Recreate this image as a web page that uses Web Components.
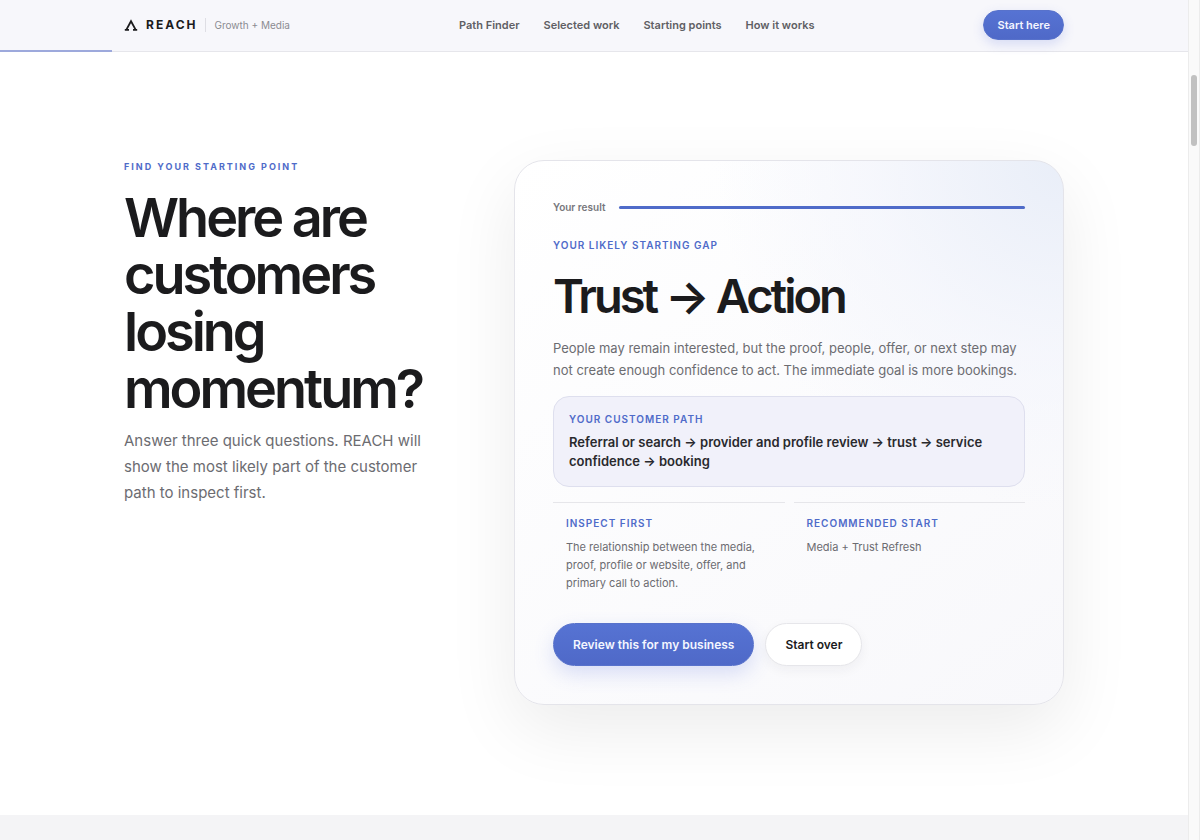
<!DOCTYPE html>
<html lang="en">
<head>
<meta charset="utf-8">
<meta name="viewport" content="width=device-width, initial-scale=1">
<title>REACH Growth + Media</title>
<style>
  :root {
    --accent: #4f6bc9;
    --ink: #1b1b1d;
    --muted: #6c6c71;
    --line: #e4e4ea;
  }
  html, body { margin: 0; }
  body {
    background: #fff;
    color: var(--ink);
    font: 400 13px/22px Inter, "Liberation Sans", sans-serif;
    -webkit-font-smoothing: antialiased;
  }
</style>
</head>
<body>
<reach-page>
  <reach-header slot="header"></reach-header>
  <path-finder>
    <section-intro slot="intro">
      <eyebrow-label slot="eyebrow" wide>Find your starting point</eyebrow-label>
      <span slot="title">Where are customers losing momentum?</span>
      <span slot="text">Answer three quick questions. REACH will show the most likely part of the customer path to inspect first.</span>
    </section-intro>
    <result-card slot="result">
      <result-progress slot="progress" value="100">Your result</result-progress>
      <eyebrow-label slot="eyebrow">Your likely starting gap</eyebrow-label>
      <span slot="title">Trust → Action</span>
      <span slot="text">People may remain interested, but the proof, people, offer, or next step may not create enough confidence to act. The immediate goal is more bookings.</span>
      <customer-path slot="path">
        <eyebrow-label slot="eyebrow">Your customer path</eyebrow-label>
        Referral or search → provider and profile review → trust → service confidence → booking
      </customer-path>
      <result-note slot="notes">
        <eyebrow-label slot="eyebrow">Inspect first</eyebrow-label>
        The relationship between the media, proof, profile or website, offer, and primary call to action.
      </result-note>
      <result-note slot="notes">
        <eyebrow-label slot="eyebrow">Recommended start</eyebrow-label>
        Media + Trust Refresh
      </result-note>
      <pill-button slot="actions" kind="primary">Review this for my business</pill-button>
      <pill-button slot="actions" kind="plain">Start over</pill-button>
    </result-card>
  </path-finder>
</reach-page>

<script>
  const define = (name, html, setup) => {
    const template = document.createElement('template');
    template.innerHTML = html;
    customElements.define(name, class extends HTMLElement {
      constructor() {
        super();
        this.attachShadow({ mode: 'open' }).append(template.content.cloneNode(true));
      }
      connectedCallback() { if (setup) setup(this, this.shadowRoot); }
    });
  };

  define('reach-page', `
    <style>
      :host { display: grid; grid-template-columns: minmax(0, 1fr) 12px; min-height: 100vh; background: #f4f4f6; }
      .rail { box-sizing: border-box; background: #fafafa; border: 1px solid #ececec; border-width: 0 1px; padding: 75px 2px 0; }
      .thumb { height: 71px; border-radius: 4px; background: #c1c1c1; }
    </style>
    <div><slot name="header"></slot><main><slot></slot></main></div>
    <div class="rail" aria-hidden="true"><div class="thumb"></div></div>
  `);

  define('reach-header', `
    <style>
      :host { display: block; position: relative; background: #f7f7fb; border-bottom: 1px solid #e6e6eb; }
      .bar { display: flex; align-items: center; justify-content: space-between; max-width: 940px; height: 50px; margin: 0 auto; padding-bottom: 1px; }
      a { color: inherit; text-decoration: none; }
      .brand { display: flex; align-items: center; line-height: 16px; }
      svg { width: 14px; height: 12px; margin-right: 8px; }
      b { font-size: 12px; font-weight: 700; letter-spacing: 2px; }
      small { margin-left: 8px; padding-left: 8px; border-left: 1px solid #dedee4; font-size: 10px; line-height: 14px; color: #8b8b91; }
      nav { display: flex; gap: 24px; font-size: 11px; line-height: 16px; font-weight: 600; color: #5f5f64; }
      .read { position: absolute; left: 0; bottom: -1px; width: 112px; height: 2px; background: #9da9dc; }
    </style>
    <header class="bar">
      <a class="brand" href="#" aria-label="REACH Growth + Media">
        <svg viewBox="0 0 14 12" aria-hidden="true"><path d="M.8 10.8H5M9 10.8H13.2M2.4 10.6 7 2.2 11.6 10.6" fill="none" stroke="#1b1b1d" stroke-width="1.8" stroke-linejoin="miter"/></svg>
        <b>REACH</b><small>Growth + Media</small>
      </a>
      <nav aria-label="Main">
        <a href="#path-finder">Path Finder</a>
        <a href="#work">Selected work</a>
        <a href="#starting-points">Starting points</a>
        <a href="#how">How it works</a>
      </nav>
      <pill-button kind="primary" small>Start here</pill-button>
    </header>
    <div class="read"></div>
  `);

  define('pill-button', `
    <style>
      :host { display: block; }
      button {
        display: block; box-sizing: border-box; height: 43px; padding: 0 19px; border: 1px solid #e6e6ea; border-radius: 22px;
        background: #fff; color: #1b1b1d; font: 600 12px/16px Inter, "Liberation Sans", sans-serif; white-space: nowrap; cursor: pointer;
        box-shadow: 0 4px 12px rgba(30, 30, 60, .05);
      }
      :host([kind="primary"]) button {
        border-color: #5872cb; color: #f4f6ff; background: linear-gradient(#5673d3, #4f69c8);
        box-shadow: 0 8px 20px rgba(79, 107, 220, .2);
      }
      :host([small]) button { height: 30px; padding: 0 13px; font-size: 11px; box-shadow: 0 4px 12px rgba(79, 107, 220, .2); }
    </style>
    <button type="button"><slot></slot></button>
  `);

  define('eyebrow-label', `
    <style>
      :host { display: block; color: var(--accent); font-size: 10px; line-height: 12px; font-weight: 600; letter-spacing: 1px; text-transform: uppercase; }
      :host([wide]) { font-size: 9px; font-weight: 700; letter-spacing: 2px; }
    </style>
    <slot></slot>
  `);

  define('path-finder', `
    <style>
      :host { display: block; background: #fff; padding: 108px 24px 110px; }
      .grid { display: grid; grid-template-columns: minmax(0, 31fr) minmax(0, 55fr); column-gap: 80px; align-items: start; max-width: 940px; margin: 0 auto; }
    </style>
    <section class="grid"><slot name="intro"></slot><slot name="result"></slot></section>
  `);

  define('section-intro', `
    <style>
      :host { display: block; padding-top: 1px; }
      h1 { margin: 16px 0 11px; font-size: 54px; line-height: 57px; font-weight: 600; letter-spacing: -3px; }
      p { margin: 0; font-size: 15px; line-height: 26px; color: var(--muted); }
    </style>
    <slot name="eyebrow"></slot>
    <h1><slot name="title"></slot></h1>
    <p><slot name="text"></slot></p>
  `);

  define('result-card', `
    <style>
      :host {
        display: block; box-sizing: border-box; padding: 38px; border: 1px solid var(--line); border-radius: 30px;
        background: radial-gradient(circle at 100% 0, #e9eef8 0, rgba(243, 245, 252, .7) 25%, rgba(252, 252, 255, 0) 45%), linear-gradient(145deg, #fff, #f8f8fb);
        box-shadow: 0 24px 70px rgba(0, 0, 0, .08);
      }
      h2 { margin: 20px 0 16px; font-size: 47px; line-height: 50px; font-weight: 600; letter-spacing: -3px; }
      p { margin: 0 0 15px; color: var(--muted); }
      .notes { display: grid; grid-template-columns: 1fr 1fr; gap: 9px; margin-top: 15px; }
      .actions { display: flex; flex-wrap: wrap; gap: 11px; margin-top: 31px; }
    </style>
    <slot name="progress"></slot>
    <slot name="eyebrow"></slot>
    <h2><slot name="title"></slot></h2>
    <p><slot name="text"></slot></p>
    <slot name="path"></slot>
    <div class="notes"><slot name="notes"></slot></div>
    <div class="actions"><slot name="actions"></slot></div>
  `);

  define('result-progress', `
    <style>
      :host { display: flex; align-items: center; gap: 14px; margin-bottom: 24px; font-size: 10px; line-height: 16px; font-weight: 600; color: #77777c; }
      .track { flex: 1; height: 3px; border-radius: 2px; background: #e2e5f2; }
      .fill { height: 3px; border-radius: 2px; background: var(--accent); }
    </style>
    <span><slot></slot></span>
    <div class="track" role="progressbar" aria-label="Your result"><div class="fill"></div></div>
  `, (host, root) => {
    root.querySelector('.fill').style.width = host.getAttribute('value') + '%';
    root.querySelector('.track').setAttribute('aria-valuenow', host.getAttribute('value'));
  });

  define('customer-path', `
    <style>
      :host { display: block; box-sizing: border-box; padding: 16px 15px 15px; border: 1px solid #dedfee; border-radius: 16px; background: #f1f1fa; }
      .steps { margin-top: 8px; font-size: 13px; line-height: 19px; font-weight: 600; color: #29292d; }
    </style>
    <slot name="eyebrow"></slot>
    <div class="steps"><slot></slot></div>
  `);

  define('result-note', `
    <style>
      :host { display: block; padding: 14px 13px 0; border-top: 1px solid #e6e6ea; }
      .text { margin-top: 9px; font-size: 11px; line-height: 18px; color: var(--muted); }
    </style>
    <slot name="eyebrow"></slot>
    <div class="text"><slot></slot></div>
  `);
</script>
</body>
</html>
